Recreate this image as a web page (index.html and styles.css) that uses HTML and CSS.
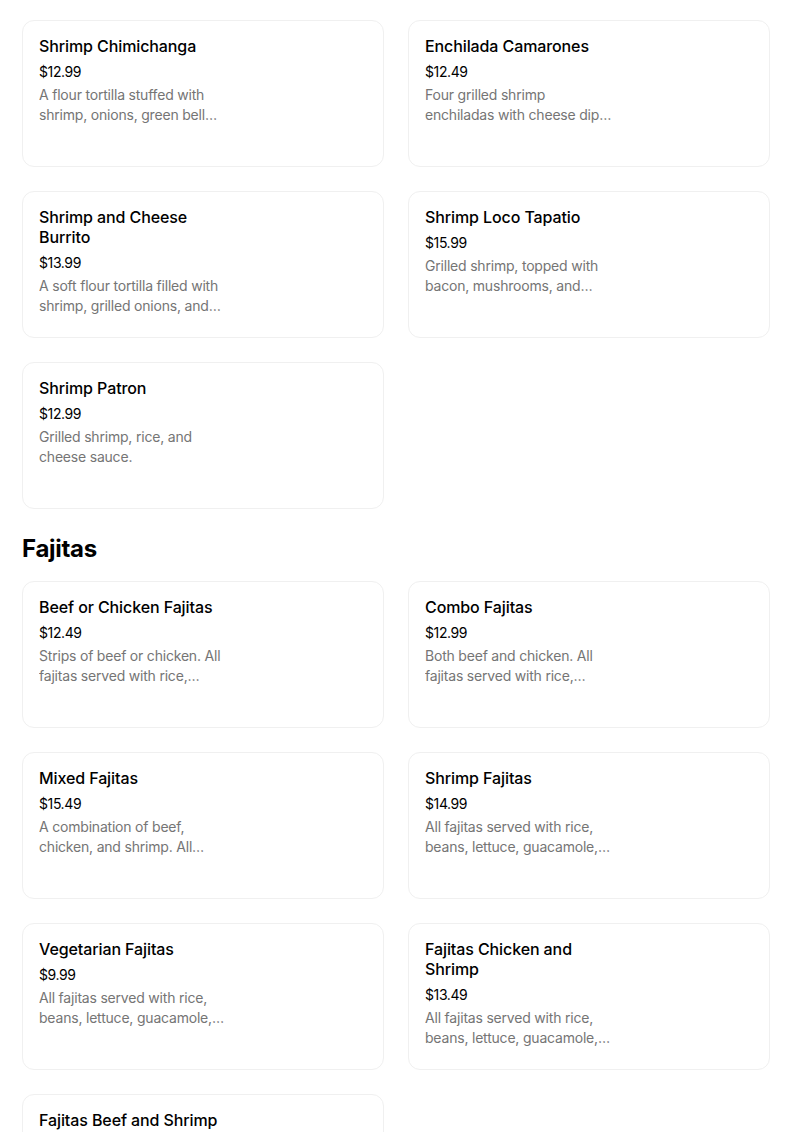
FILE: index.html
```html
<!DOCTYPE html>
<html>
<head>
<meta charset="utf-8">
<link rel="stylesheet" href="styles.css">
</head>
<body>
<main class="menu">
  <section class="section">
    <div class="grid">
      <div class="card"><div class="info"><div class="title">Shrimp Chimichanga</div><div class="price">$12.99</div><div class="desc">A flour tortilla stuffed with shrimp, onions, green bell peppers, and tomatoes.</div></div></div>
      <div class="card"><div class="info"><div class="title">Enchilada Camarones</div><div class="price">$12.49</div><div class="desc">Four grilled shrimp enchiladas with cheese dip and rice.</div></div></div>
      <div class="card"><div class="info"><div class="title">Shrimp and Cheese Burrito</div><div class="price">$13.99</div><div class="desc">A soft flour tortilla filled with shrimp, grilled onions, and cheese.</div></div></div>
      <div class="card"><div class="info"><div class="title">Shrimp Loco Tapatio</div><div class="price">$15.99</div><div class="desc">Grilled shrimp, topped with bacon, mushrooms, and cheese.</div></div></div>
      <div class="card"><div class="info"><div class="title">Shrimp Patron</div><div class="price">$12.99</div><div class="desc">Grilled shrimp, rice, and cheese sauce.</div></div></div>
    </div>
  </section>
  <section class="section">
    <h2 class="heading">Fajitas</h2>
    <div class="grid">
      <div class="card"><div class="info"><div class="title">Beef or Chicken Fajitas</div><div class="price">$12.49</div><div class="desc">Strips of beef or chicken. All fajitas served with rice, beans, lettuce, guacamole.</div></div></div>
      <div class="card"><div class="info"><div class="title">Combo Fajitas</div><div class="price">$12.99</div><div class="desc">Both beef and chicken. All fajitas served with rice, beans, lettuce.</div></div></div>
      <div class="card"><div class="info"><div class="title">Mixed Fajitas</div><div class="price">$15.49</div><div class="desc">A combination of beef, chicken, and shrimp. All fajitas served with rice.</div></div></div>
      <div class="card"><div class="info"><div class="title">Shrimp Fajitas</div><div class="price">$14.99</div><div class="desc">All fajitas served with rice, beans, lettuce, guacamole, sour cream.</div></div></div>
      <div class="card"><div class="info"><div class="title">Vegetarian Fajitas</div><div class="price">$9.99</div><div class="desc">All fajitas served with rice, beans, lettuce, guacamole, sour cream.</div></div></div>
      <div class="card"><div class="info"><div class="title">Fajitas Chicken and Shrimp</div><div class="price">$13.49</div><div class="desc">All fajitas served with rice, beans, lettuce, guacamole, sour cream.</div></div></div>
      <div class="card"><div class="info"><div class="title">Fajitas Beef and Shrimp</div><div class="price">$14.49</div><div class="desc">All fajitas served with rice, beans, lettuce, guacamole, sour cream.</div></div></div>
    </div>
  </section>
</main>
</body>
</html>
```
FILE: styles.css
```css
* { box-sizing: border-box; }
html, body { margin: 0; padding: 0; background: #fff; }
body {
  font-family: "Inter", "Liberation Sans", sans-serif;
  color: #000;
}
.menu {
  padding: 20px 34px 0 22px;
}
.section + .section { margin-top: 24px; }
.heading {
  margin: 0 0 16px 0;
  font-size: 24px;
  line-height: 32px;
  font-weight: 700;
  letter-spacing: -0.3px;
}
.grid {
  display: grid;
  grid-template-columns: 1fr 1fr;
  column-gap: 24px;
  row-gap: 24px;
}
.card {
  height: 147px;
  border: 1px solid #f0f0f0;
  border-radius: 12px;
  padding: 15px 16px;
  display: flex;
}
.info {
  width: 192px;
}
.title {
  font-size: 16px;
  line-height: 20px;
  font-weight: 500;
  letter-spacing: -0.1px;
}
.price {
  margin-top: 6px;
  font-size: 14px;
  line-height: 20px;
  letter-spacing: -0.4px;
}
.desc {
  margin-top: 3px;
  font-size: 14px;
  line-height: 20px;
  color: #757575;
  letter-spacing: -0.2px;
  display: -webkit-box;
  -webkit-line-clamp: 2;
  -webkit-box-orient: vertical;
  overflow: hidden;
}
```
